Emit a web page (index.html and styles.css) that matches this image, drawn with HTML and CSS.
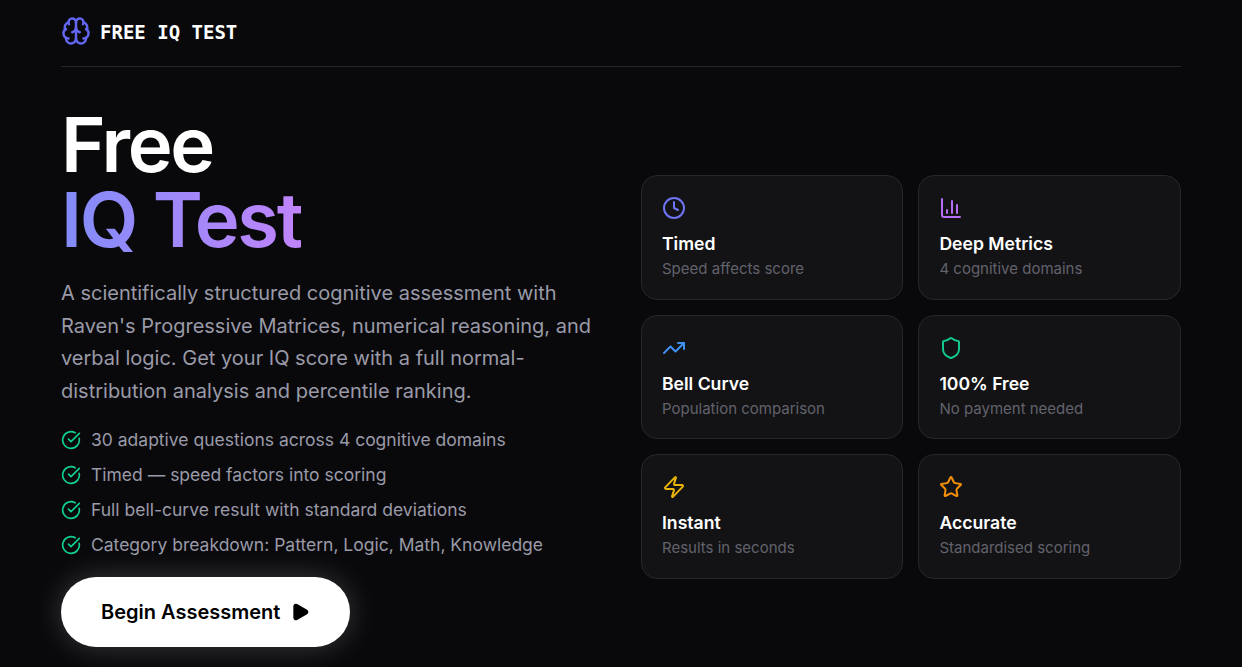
FILE: index.html
```html
<!DOCTYPE html>
<html lang="en">
<head>
  <meta charset="UTF-8" />
  <meta name="viewport" content="width=device-width, initial-scale=1.0" />
  <title>Free IQ Test</title>
  <link rel="stylesheet" href="styles.css">
</head>
<body>
  <div class="page">
    <!-- Top bar -->
    <header class="topbar">
      <svg class="logo" viewBox="0 0 24 24" fill="none" stroke="currentColor" stroke-width="2" stroke-linecap="round" stroke-linejoin="round">
        <path d="M12 18V5"/><path d="M15 13a4.17 4.17 0 0 1-3-4 4.17 4.17 0 0 1-3 4"/><path d="M17.598 6.5A3 3 0 1 0 12 5a3 3 0 1 0-5.598 1.5"/><path d="M17.997 5.125a4 4 0 0 1 2.526 5.77"/><path d="M18 18a4 4 0 0 0 2-7.464"/><path d="M19.967 17.483A4 4 0 1 1 12 18a4 4 0 1 1-7.967-.517"/><path d="M6 18a4 4 0 0 1-2-7.464"/><path d="M6.003 5.125a4 4 0 0 0-2.526 5.77"/>
      </svg>
      <span class="brand">FREE IQ TEST</span>
    </header>

    <main class="hero">
      <!-- Left column -->
      <section class="intro">
        <h1>Free<br><span class="grad">IQ Test</span></h1>
        <p class="lead">A scientifically structured cognitive assessment with Raven's Progressive Matrices, numerical reasoning, and verbal logic. Get your IQ score with a full normal-distribution analysis and percentile ranking.</p>
        <ul class="checks">
          <li><svg class="tick" viewBox="0 0 24 24" fill="none" stroke="currentColor" stroke-width="2" stroke-linecap="round" stroke-linejoin="round"><path d="M21.801 10A10 10 0 1 1 17 3.335"/><path d="m9 11 3 3L22 4"/></svg>30 adaptive questions across 4 cognitive domains</li>
          <li><svg class="tick" viewBox="0 0 24 24" fill="none" stroke="currentColor" stroke-width="2" stroke-linecap="round" stroke-linejoin="round"><path d="M21.801 10A10 10 0 1 1 17 3.335"/><path d="m9 11 3 3L22 4"/></svg>Timed — speed factors into scoring</li>
          <li><svg class="tick" viewBox="0 0 24 24" fill="none" stroke="currentColor" stroke-width="2" stroke-linecap="round" stroke-linejoin="round"><path d="M21.801 10A10 10 0 1 1 17 3.335"/><path d="m9 11 3 3L22 4"/></svg>Full bell-curve result with standard deviations</li>
          <li><svg class="tick" viewBox="0 0 24 24" fill="none" stroke="currentColor" stroke-width="2" stroke-linecap="round" stroke-linejoin="round"><path d="M21.801 10A10 10 0 1 1 17 3.335"/><path d="m9 11 3 3L22 4"/></svg>Category breakdown: Pattern, Logic, Math, Knowledge</li>
        </ul>
        <button class="cta">Begin Assessment
          <svg class="play" viewBox="0 0 24 24" fill="currentColor" stroke="currentColor" stroke-width="2" stroke-linecap="round" stroke-linejoin="round"><path d="M5 5a2 2 0 0 1 3.008-1.728l11.997 6.998a2 2 0 0 1 .003 3.458l-12 7A2 2 0 0 1 5 19z"/></svg>
        </button>
      </section>

      <!-- Feature cards -->
      <section class="cards">
        <div class="card">
          <svg class="ico indigo" viewBox="0 0 24 24" fill="none" stroke="currentColor" stroke-width="2" stroke-linecap="round" stroke-linejoin="round"><circle cx="12" cy="12" r="10"/><path d="M12 6v6l4 2"/></svg>
          <h3>Timed</h3>
          <p>Speed affects score</p>
        </div>
        <div class="card">
          <svg class="ico purple" viewBox="0 0 24 24" fill="none" stroke="currentColor" stroke-width="2" stroke-linecap="round" stroke-linejoin="round"><path d="M3 3v16a2 2 0 0 0 2 2h16"/><path d="M18 17V9"/><path d="M13 17V5"/><path d="M8 17v-3"/></svg>
          <h3>Deep Metrics</h3>
          <p>4 cognitive domains</p>
        </div>
        <div class="card">
          <svg class="ico blue" viewBox="0 0 24 24" fill="none" stroke="currentColor" stroke-width="2" stroke-linecap="round" stroke-linejoin="round"><path d="M16 7h6v6"/><path d="m22 7-8.5 8.5-5-5L2 17"/></svg>
          <h3>Bell Curve</h3>
          <p>Population comparison</p>
        </div>
        <div class="card">
          <svg class="ico green" viewBox="0 0 24 24" fill="none" stroke="currentColor" stroke-width="2" stroke-linecap="round" stroke-linejoin="round"><path d="M20 13c0 5-3.5 7.5-7.66 8.95a1 1 0 0 1-.67-.01C7.5 20.5 4 18 4 13V6a1 1 0 0 1 1-1c2 0 4.5-1.2 6.24-2.72a1.17 1.17 0 0 1 1.52 0C14.51 3.81 17 5 19 5a1 1 0 0 1 1 1z"/></svg>
          <h3>100% Free</h3>
          <p>No payment needed</p>
        </div>
        <div class="card">
          <svg class="ico yellow" viewBox="0 0 24 24" fill="none" stroke="currentColor" stroke-width="2" stroke-linecap="round" stroke-linejoin="round"><path d="M4 14a1 1 0 0 1-.78-1.63l9.9-10.2a.5.5 0 0 1 .86.46l-1.92 6.02A1 1 0 0 0 13 10h7a1 1 0 0 1 .78 1.63l-9.9 10.2a.5.5 0 0 1-.86-.46l1.92-6.02A1 1 0 0 0 11 14z"/></svg>
          <h3>Instant</h3>
          <p>Results in seconds</p>
        </div>
        <div class="card">
          <svg class="ico orange" viewBox="0 0 24 24" fill="none" stroke="currentColor" stroke-width="2" stroke-linecap="round" stroke-linejoin="round"><path d="M11.525 2.295a.53.53 0 0 1 .95 0l2.31 4.679a2.123 2.123 0 0 0 1.595 1.16l5.166.756a.53.53 0 0 1 .294.904l-3.736 3.638a2.123 2.123 0 0 0-.611 1.878l.882 5.14a.53.53 0 0 1-.771.56l-4.618-2.428a2.122 2.122 0 0 0-1.973 0L6.396 21.01a.53.53 0 0 1-.77-.56l.881-5.139a2.122 2.122 0 0 0-.611-1.879L2.16 9.795a.53.53 0 0 1 .294-.906l5.165-.755a2.122 2.122 0 0 0 1.597-1.16z"/></svg>
          <h3>Accurate</h3>
          <p>Standardised scoring</p>
        </div>
      </section>
    </main>
  </div>
</body>
</html>
```
FILE: styles.css
```css
:root {
  --bg: #09090b;
  --card: #131315;
  --line: #27272a;
  --muted: #9a9aa8;
  --dim: #62626c;
}
*, *::before, *::after { box-sizing: border-box; }
html, body { margin: 0; }
body {
  background: var(--bg);
  color: #fff;
  font-family: Inter, "Liberation Sans", sans-serif;
}

.page {
  max-width: 1120px;
  margin: 0 auto;
}

/* top bar */
.topbar {
  display: flex;
  align-items: center;
  gap: 9px;
  height: 67px;
  padding-bottom: 4px;
  border-bottom: 1px solid var(--line);
}
.logo { width: 30px; height: 30px; color: #6366f1; }
.brand {
  margin-top: 2px;
  font-family: "DejaVu Sans Mono", "Liberation Mono", monospace;
  font-weight: 700;
  font-size: 19px;
}

/* two columns */
.hero {
  display: grid;
  grid-template-columns: 1fr 1fr;
  gap: 40px;
  align-items: center;
  padding: 40px 0 20px;
}

h1 {
  margin: 0 0 20px;
  font-size: 76px;
  font-weight: 600;
  line-height: 75px;
  letter-spacing: -2.36px;
}
.grad {
  background: linear-gradient(90deg, #818cf8, #c084fc);
  -webkit-background-clip: text;
  background-clip: text;
  color: transparent;
}
.lead {
  margin: 0 0 14px;
  font-size: 20px;
  line-height: 32.64px;
  color: var(--muted);
}

.checks {
  list-style: none;
  margin: 0 0 15px;
  padding: 0;
}
.checks li {
  display: flex;
  align-items: center;
  gap: 10px;
  height: 35px;
  font-size: 17.5px;
  color: var(--muted);
}
.tick { width: 20px; height: 20px; margin-top: 2px; color: #10d08f; flex: none; }

.cta {
  display: inline-flex;
  align-items: center;
  gap: 10px;
  height: 70px;
  padding: 0 40px;
  border: none;
  border-radius: 999px;
  background: #fff;
  color: #000;
  font-family: inherit;
  font-size: 20px;
  font-weight: 600;
  box-shadow: 0 0 30px rgba(255,255,255,.2);
}
.play { width: 20px; height: 20px; }

/* feature cards */
.cards {
  display: grid;
  grid-template-columns: 262px 262.6px;
  justify-content: space-between;
  row-gap: 15px;
}
.card {
  padding: 20px;
  border: 1px solid var(--line);
  border-radius: 16px;
  background: var(--card);
}
.ico { display: block; width: 24px; height: 24px; margin-bottom: 12px; }
.indigo { color: #6f74f5; }
.purple { color: #b76ef5; }
.blue { color: #3f8ff0; }
.green { color: #10c98b; }
.yellow { color: #eab308; }
.orange { color: #f59008; }
.card h3 { margin: 0 0 3px; font-size: 17.6px; font-weight: 600; line-height: 24px; }
.card p { margin: 0; font-size: 15px; line-height: 19.5px; color: var(--dim); }
```
